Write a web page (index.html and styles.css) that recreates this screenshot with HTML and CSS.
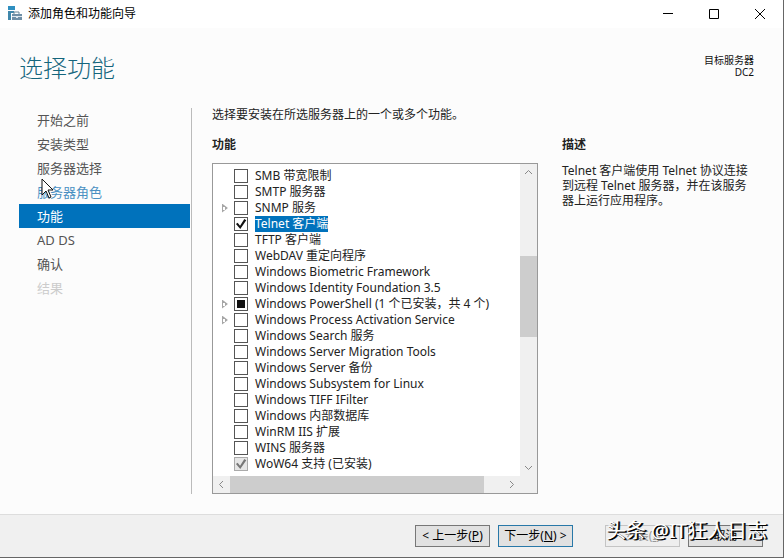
FILE: index.html
```html
<!DOCTYPE html>
<html lang="zh-CN">
  <head>
    <meta charset="UTF-8" />
    <meta name="viewport" content="width=device-width, initial-scale=1" />
    <title>添加角色和功能向导</title>
    <link rel="stylesheet" href="styles.css">
  </head>
  <body>
    <div class="window">
      <!-- Title bar -->
      <div class="titlebar">
        <svg class="app-icon" width="16" height="16" viewBox="0 0 16 16">
          <path d="M1 0h7v4H1z" fill="#2f8fc0" />
          <path d="M1 5h6v2H4v7H1z" fill="#3f87ab" />
          <path d="M7 8V6h5v2" fill="none" stroke="#6b8799" />
          <path d="M5 8h10v6H5z" fill="#6f8fa6" />
          <path d="M5 10.500h4m2 0h4" stroke="#dfe8ee" />
          <path d="M9 10h2v2H9z" fill="#dfe8ee" />
        </svg>
        <span class="caption">添加角色和功能向导</span>
        <button class="win-btn" aria-label="最小化">
          <svg width="12" height="12" viewBox="0 0 12 12"><path d="M1 5.500h10" /></svg>
        </button>
        <button class="win-btn" aria-label="最大化">
          <svg width="12" height="12" viewBox="0 0 12 12"><path d="M1.500 1.500h9v9h-9z" /></svg>
        </button>
        <button class="win-btn" aria-label="关闭">
          <svg width="12" height="12" viewBox="0 0 12 12"><path d="M1 1l10 10M11 1L1 11" /></svg>
        </button>
      </div>

      <!-- Page heading -->
      <header class="header">
        <h1>选择功能</h1>
        <div class="target">目标服务器<br />DC2</div>
      </header>

      <div class="content">
        <!-- Wizard steps -->
        <nav class="steps">
          <a href="#">开始之前</a>
          <a href="#">安装类型</a>
          <a href="#">服务器选择</a>
          <a href="#" class="hover">服务器角色
            <svg class="cursor" width="13" height="21" viewBox="0 0 13 21">
              <path d="M1 1v16l4-4 3 7 2-1-3-7h5z" fill="#fff" stroke="#111" />
            </svg>
          </a>
          <a href="#" class="current">功能</a>
          <a href="#">AD DS</a>
          <a href="#">确认</a>
          <a class="disabled">结果</a>
        </nav>

        <main class="main">
          <p class="intro">选择要安装在所选服务器上的一个或多个功能。</p>
          <div class="columns">
            <section class="features">
              <h2>功能</h2>
              <div class="listbox">
                <ul class="tree">
                  <li><label><input type="checkbox" />SMB 带宽限制</label></li>
                  <li><label><input type="checkbox" />SMTP 服务器</label></li>
                  <li><button class="expander" aria-label="展开"></button><label><input type="checkbox" />SNMP 服务</label></li>
                  <li><label><input type="checkbox" checked /><span class="selected">Telnet 客户端</span></label></li>
                  <li><label><input type="checkbox" />TFTP 客户端</label></li>
                  <li><label><input type="checkbox" />WebDAV 重定向程序</label></li>
                  <li><label><input type="checkbox" />Windows Biometric Framework</label></li>
                  <li><label><input type="checkbox" />Windows Identity Foundation 3.5</label></li>
                  <li><button class="expander" aria-label="展开"></button><label><input type="checkbox" class="partial" aria-checked="mixed" />Windows PowerShell (1 个已安装，共 4 个)</label></li>
                  <li><button class="expander" aria-label="展开"></button><label><input type="checkbox" />Windows Process Activation Service</label></li>
                  <li><label><input type="checkbox" />Windows Search 服务</label></li>
                  <li><label><input type="checkbox" />Windows Server Migration Tools</label></li>
                  <li><label><input type="checkbox" />Windows Server 备份</label></li>
                  <li><label><input type="checkbox" />Windows Subsystem for Linux</label></li>
                  <li><label><input type="checkbox" />Windows TIFF IFilter</label></li>
                  <li><label><input type="checkbox" />Windows 内部数据库</label></li>
                  <li><label><input type="checkbox" />WinRM IIS 扩展</label></li>
                  <li><label><input type="checkbox" />WINS 服务器</label></li>
                  <li><label><input type="checkbox" checked disabled />WoW64 支持 (已安装)</label></li>
                </ul>
                <div class="scroll vertical">
                  <button aria-label="向上"><svg width="9" height="9" viewBox="0 0 9 9"><path d="M1 6l3.500-3.500L8 6" /></svg></button>
                  <div class="track"><div class="thumb"></div></div>
                  <button aria-label="向下"><svg width="9" height="9" viewBox="0 0 9 9"><path d="M1 3l3.500 3.500L8 3" /></svg></button>
                </div>
                <div class="scroll horizontal">
                  <button aria-label="向左"><svg width="9" height="9" viewBox="0 0 9 9"><path d="M6 1L2.500 4.500 6 8" /></svg></button>
                  <div class="track"><div class="thumb"></div></div>
                  <button aria-label="向右"><svg width="9" height="9" viewBox="0 0 9 9"><path d="M3 1l3.500 3.500L3 8" /></svg></button>
                </div>
              </div>
            </section>
            <section class="description">
              <h2>描述</h2>
              <p>Telnet 客户端使用 Telnet 协议连接到远程 Telnet 服务器，并在该服务器上运行应用程序。</p>
            </section>
          </div>
        </main>
      </div>

      <!-- Wizard buttons -->
      <footer class="footer">
        <button class="btn">&lt; 上一步(<u>P</u>)</button>
        <button class="btn default">下一步(<u>N</u>) &gt;</button>
        <button class="btn gap" disabled>安装(<u>I</u>)</button>
        <button class="btn">取消</button>
        <span class="watermark">头条 @IT狂人日志</span>
      </footer>
    </div>
  </body>
</html>
```
FILE: styles.css
```css
* {
  box-sizing: border-box;
}
body {
  margin: 0;
  font-family: "Noto Sans", "Noto Sans CJK SC", sans-serif;
  font-size: 12px;
  line-height: 16px;
  color: #222;
}
h1,
h2,
p,
ul {
  margin: 0;
  padding: 0;
}
button {
  font: inherit;
  color: inherit;
  padding: 0;
  border: 0;
  background: none;
}
svg {
  display: block;
}
.window {
  display: flex;
  flex-direction: column;
  min-height: 100vh;
  background: #fcfcfc;
  border-right: 1px solid #666;
  border-bottom: 1px solid #666;
}

/* title bar */
.titlebar {
  display: flex;
  align-items: center;
  height: 28px;
  padding-left: 7px;
  background: #fff;
}
.caption {
  flex: 1;
  margin-left: 5px;
  color: #000;
}
.win-btn {
  display: flex;
  align-items: center;
  justify-content: center;
  width: 46px;
  height: 28px;
}
.win-btn path {
  fill: none;
  stroke: #000;
}

/* heading */
.header {
  display: flex;
  justify-content: space-between;
  align-items: flex-start;
  padding: 23px 29px 0 19px;
  height: 80px;
}
h1 {
  font-size: 24px;
  line-height: 32px;
  font-weight: 300;
  font-family: "Noto Sans CJK SC", sans-serif;
  color: #14657c;
}
.target {
  font-size: 10px;
  line-height: 12px;
  padding-top: 3px;
  text-align: right;
  color: #111;
}

.content {
  flex: 1;
  display: flex;
  padding: 0 29px 20px 19px;
}

/* steps */
.steps {
  width: 173px;
  padding-right: 1px;
  border-right: 1px solid #bbb;
  font-size: 13px;
  line-height: 24px;
}
.steps a {
  display: block;
  position: relative;
  height: 24px;
  padding-left: 18px;
  color: #555;
  text-decoration: none;
}
.steps .hover {
  color: #4a90c2;
}
.steps .current {
  background: #0072bc;
  color: #fff;
}
.steps .disabled {
  color: #ccc;
}
.cursor {
  position: absolute;
  left: 22px;
  top: -2px;
  z-index: 1;
}

/* feature list */
.main {
  flex: 1;
  display: flex;
  flex-direction: column;
  margin-left: 20px;
}
.intro {
  line-height: 14px;
  margin-bottom: 15px;
}
.columns {
  flex: 1;
  display: flex;
  gap: 24px;
}
h2 {
  font-size: 12px;
  line-height: 16px;
  margin-bottom: 10px;
}
.features {
  flex: 1;
  display: flex;
  flex-direction: column;
}
.description {
  width: 192px;
}
.description p {
  line-height: 15px;
}
.listbox {
  flex: 1;
  display: grid;
  grid-template-columns: 1fr 17px;
  grid-template-rows: 1fr 17px;
  border: 1px solid #999;
  background: #f0f0f0;
}
.tree {
  padding: 4px 0 4px 7px;
  background: #fff;
  list-style: none;
}
.tree li {
  display: flex;
  justify-content: flex-start;
  height: 16px;
  white-space: nowrap;
}
.tree label {
  display: flex;
  align-items: center;
  gap: 7px;
  margin-left: 14px;
}
.expander {
  width: 14px;
  height: 16px;
}
.expander + label {
  margin-left: 0;
}
.expander::before {
  content: "";
  display: block;
  width: 7px;
  height: 9px;
  margin-left: 2px;
  background:
    linear-gradient(#fff, #fff) 1px 3px / 2px 3px no-repeat,
    #a6a6a6;
  clip-path: polygon(0 0, 85% 50%, 0 100%);
}
.tree input {
  appearance: none;
  width: 14px;
  height: 14px;
  margin: 0;
  border: 1px solid #555;
  background: #fff;
}
.tree input:checked::before {
  content: "";
  display: block;
  height: 12px;
  background: #111;
  clip-path: polygon(8% 50%, 22% 40%, 42% 64%, 78% 8%, 94% 18%, 44% 92%);
}
.tree input:disabled {
  border-color: #aaa;
  background: #e6e6e6;
}
.tree input:disabled::before {
  background: #777;
}
.tree .partial::before {
  content: "";
  display: block;
  width: 8px;
  height: 8px;
  margin: 2px;
  background: #111;
}
.selected {
  background: #0072bc;
  color: #fff;
}

/* scroll bars */
.scroll {
  display: flex;
}
.scroll button {
  display: flex;
  align-items: center;
  justify-content: center;
  width: 17px;
  height: 17px;
}
.scroll path {
  fill: none;
  stroke: #888;
}
.scroll .track {
  flex: 1;
  display: flex;
}
.scroll .thumb {
  background: #cdcdcd;
}
.vertical,
.vertical .track {
  flex-direction: column;
}
.vertical .thumb {
  height: 29%;
  margin-top: 75px;
}
.horizontal .thumb {
  width: 93%;
}

/* buttons */
.footer {
  position: relative;
  display: flex;
  justify-content: flex-end;
  gap: 8px;
  padding: 10px 20px;
  background: #f0f0f0;
  border-top: 1px solid #ddd;
}
.btn {
  width: 75px;
  height: 22px;
  border: 1px solid #777;
  background: #e1e1e1;
  color: #000;
}
.btn.default {
  border-color: #2878a8;
}
.btn.gap {
  margin-left: 24px;
}
.btn:disabled {
  border-color: #c4c4c4;
  background: #eee;
  color: #999;
}
.watermark {
  position: absolute;
  right: 16px;
  top: 4px;
  font-size: 20px;
  line-height: 24px;
  color: #fff;
  text-shadow: 1px 1px 0 #000, 2px 1px 0 #222;
  white-space: nowrap;
}
```
